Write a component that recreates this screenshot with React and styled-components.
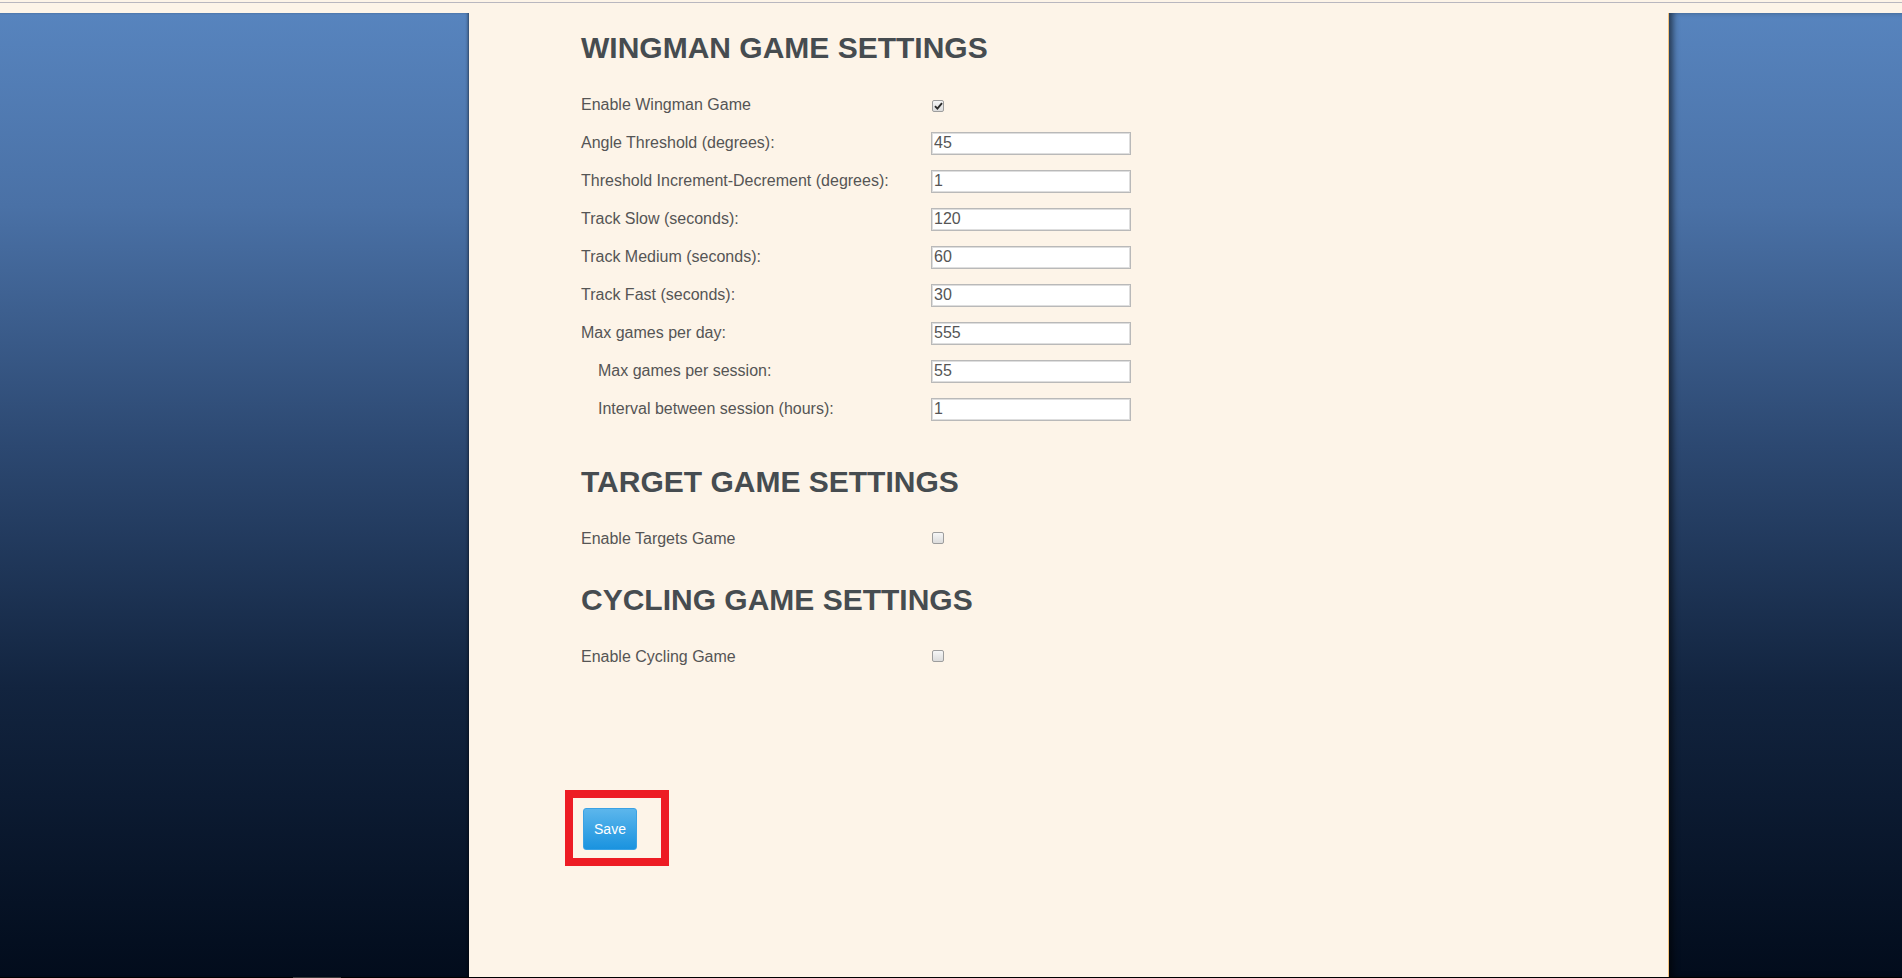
import React from "react";
import styled, { createGlobalStyle } from "styled-components";

const GlobalStyle = createGlobalStyle`
  html, body { margin: 0; padding: 0; }
  body {
    font-family: "Liberation Sans", Arial, sans-serif;
    background: #fdf4e8;
    overflow: hidden;
  }
`;

const Page = styled.div`
  display: flex;
  flex-direction: column;
  height: 978px;
  width: 100%;
`;

const TopBar = styled.div`
  flex: 0 0 13px;
  box-sizing: border-box;
  padding-top: 2px;
  background: #fdf4e8;
`;

const Rule = styled.div`
  height: 1px;
  background: #b9b7bf;
`;

const Main = styled.div`
  flex: 1 1 auto;
  min-height: 0;
  display: flex;
`;

const Side = styled.div`
  flex: ${(p) => (p.$fill ? "1 1 auto" : "0 0 469px")};
  background: linear-gradient(
    to bottom,
    #5784be 0%,
    #4a71a6 20%,
    #2c4871 45%,
    #12243f 70%,
    #020c1c 100%
  );
  box-shadow: ${(p) =>
    p.$fill
      ? "inset 6px 0 6px -2px rgba(0, 0, 0, 0.55)"
      : "inset -2px 0 3px -1px rgba(0, 0, 0, 0.5)"};
`;

const Content = styled.main`
  flex: 0 0 1200px;
  box-sizing: border-box;
  background: #fdf4e8;
  border-right: 1px solid #f2c27c;
  padding: 18px 0 0 112px;
`;

const Section = styled.section`
  margin-bottom: ${(p) => p.$after || 0}px;
`;

const Heading = styled.h2`
  margin: 0 0 21px;
  font-family: "Liberation Sans", Arial, sans-serif;
  font-weight: 700;
  font-size: 30px;
  line-height: 34px;
  color: #464c50;
`;

const Row = styled.div`
  display: grid;
  grid-template-columns: 350px 200px;
  align-items: center;
  height: 38px;
`;

const Label = styled.label`
  font-size: 16px;
  color: #555555;
  padding-left: ${(p) => (p.$indent ? 17 : 0)}px;
  white-space: nowrap;
`;

const TextInput = styled.input`
  box-sizing: border-box;
  width: 200px;
  height: 23px;
  margin: 0;
  padding: 0 2px;
  border: 1px solid #b9b9b9;
  box-shadow: inset 0 0 0 1px #dedede;
  background: #ffffff;
  font-family: "Liberation Sans", Arial, sans-serif;
  font-size: 16px;
  color: #555555;
  outline: none;
`;

const CheckBox = styled.span`
  box-sizing: border-box;
  display: inline-flex;
  align-items: center;
  justify-content: center;
  width: 12px;
  height: 12px;
  margin-left: 1px;
  border: 1px solid #9d9d9d;
  border-radius: 2px;
  background: linear-gradient(to bottom, #f6f6f6, #dcdcdc);
`;

const SaveArea = styled.div`
  display: inline-block;
  margin: 114px 0 0 -16px;
  border: 8px solid #ed1c24;
  padding: 10px 24px 8px 10px;
`;

const SaveButton = styled.button`
  box-sizing: border-box;
  display: flex;
  align-items: center;
  justify-content: center;
  width: 54px;
  height: 42px;
  padding: 0;
  border: 1px solid #3ba2e4;
  border-radius: 3px;
  background: linear-gradient(to bottom, #5cb6ec, #1a93df);
  color: #ffffff;
  font-family: "Liberation Sans", Arial, sans-serif;
  font-size: 14px;
  cursor: pointer;
`;

const BottomLine = styled.div`
  flex: 0 0 1px;
  background: #000000;
  display: flex;
`;

const BottomMark = styled.div`
  margin-left: 293px;
  width: 48px;
  height: 1px;
  background: #3a3a3a;
`;

function Check({ checked }) {
  return (
    <CheckBox role="checkbox" aria-checked={checked}>
      {checked && (
        <svg width="9" height="8" viewBox="0 0 9 8">
          <path
            d="M1 4.2 L3.4 6.6 L8 1.2"
            fill="none"
            stroke="#2b2b2b"
            strokeWidth="1.9"
          />
        </svg>
      )}
    </CheckBox>
  );
}

const wingmanFields = [
  { label: "Angle Threshold (degrees):", value: "45" },
  { label: "Threshold Increment-Decrement (degrees):", value: "1" },
  { label: "Track Slow (seconds):", value: "120" },
  { label: "Track Medium (seconds):", value: "60" },
  { label: "Track Fast (seconds):", value: "30" },
  { label: "Max games per day:", value: "555" },
  { label: "Max games per session:", value: "55", indent: true },
  { label: "Interval between session (hours):", value: "1", indent: true },
];

export default function App() {
  return (
    <>
      <GlobalStyle />
      <Page>
        <TopBar>
          <Rule />
        </TopBar>
        <Main>
          <Side />
          <Content>
            <Section $after={37}>
              <Heading>WINGMAN GAME SETTINGS</Heading>
              <Row>
                <Label>Enable Wingman Game</Label>
                <div>
                  <Check checked />
                </div>
              </Row>
              {wingmanFields.map((f) => (
                <Row key={f.label}>
                  <Label $indent={f.indent}>{f.label}</Label>
                  <TextInput defaultValue={f.value} />
                </Row>
              ))}
            </Section>
            <Section $after={25}>
              <Heading>TARGET GAME SETTINGS</Heading>
              <Row>
                <Label>Enable Targets Game</Label>
                <div>
                  <Check />
                </div>
              </Row>
            </Section>
            <Section>
              <Heading>CYCLING GAME SETTINGS</Heading>
              <Row>
                <Label>Enable Cycling Game</Label>
                <div>
                  <Check />
                </div>
              </Row>
            </Section>
            <SaveArea>
              <SaveButton type="button">Save</SaveButton>
            </SaveArea>
          </Content>
          <Side $fill />
        </Main>
        <BottomLine>
          <BottomMark />
        </BottomLine>
      </Page>
    </>
  );
}
